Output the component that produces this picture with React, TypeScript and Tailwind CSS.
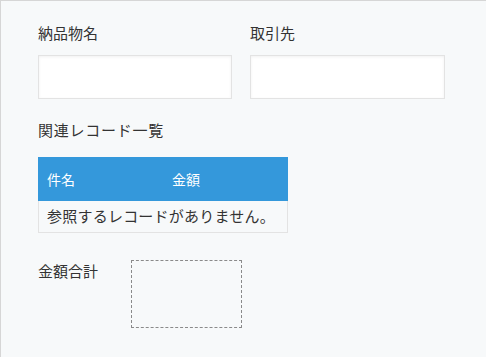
export default function App() {
  return (
    <div
      className="w-[486px] h-[357px] overflow-hidden bg-[#f7f9fa] border-t border-l border-[#d6d6d6] text-[#333333] text-[15px]"
      style={{ fontFamily: '"Noto Sans CJK JP", "Noto Sans", sans-serif' }}
    >
      <div className="pl-[37px] pt-[22px]">
        <div className="flex gap-[18px]">
          <div className="flex flex-col">
            <div className="h-[20px] leading-[20px]">納品物名</div>
            <div className="mt-[12px] w-[194px] h-[44px] bg-white border border-[#e3e3e3] shadow-[inset_0_1px_3px_rgba(0,0,0,0.06)]" />
          </div>
          <div className="flex flex-col">
            <div className="h-[20px] leading-[20px]">取引先</div>
            <div className="mt-[12px] w-[195px] h-[44px] bg-white border border-[#e3e3e3] shadow-[inset_0_1px_3px_rgba(0,0,0,0.06)]" />
          </div>
        </div>

        <div className="mt-[21px] h-[20px] leading-[20px] tracking-[0.05em]">関連レコード一覧</div>
        <div className="mt-[17px] w-[250px]">
          <div className="flex h-[44px] items-center bg-[#3498db] text-white text-[14px]">
            <div className="w-[125px] pl-[9px]">件名</div>
            <div className="w-[125px] pl-[9px]">金額</div>
          </div>
          <div className="h-[32px] flex items-center pl-[8px] border border-t-0 border-[#e3e3e3] tracking-[0.015em]">
            参照するレコードがありません。
          </div>
        </div>

        <div className="mt-[27px] flex">
          <div className="w-[93px] leading-[20px] pt-[1px]">金額合計</div>
          <div className="w-[111px] h-[68px] border border-dashed border-[#8a8a8a]" />
        </div>
      </div>
    </div>
  );
}
